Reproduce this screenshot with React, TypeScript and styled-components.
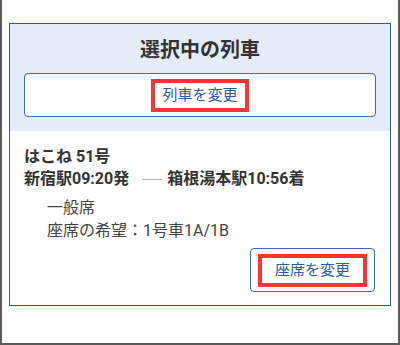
import React from "react";
import styled, { createGlobalStyle } from "styled-components";

const Global = createGlobalStyle`
  html, body { margin: 0; padding: 0; background: #fff; }
  body { font-family: Roboto, "Noto Sans CJK JP", sans-serif; }
  * { box-sizing: border-box; }
`;

const Frame = styled.div`
  width: 400px;
  height: 345px;
  border-left: 2px solid #5a5a5a;
  border-right: 2px solid #5a5a5a;
  border-bottom: 2px solid #5a5a5a;
  padding: 23px 7px 0 7px;
  background: #fff;
`;

const Card = styled.section`
  border: 1px solid #2f5ca6;
  background: #fff;
`;

const Header = styled.div`
  background: #e5ecf8;
  padding: 12px 14px 14px 14px;
  display: flex;
  flex-direction: column;
  align-items: stretch;
  gap: 9px;
`;

const Title = styled.h2`
  margin: 0;
  text-align: center;
  font-size: 20px;
  line-height: 28px;
  font-weight: 700;
  color: #333;
`;

const OutlineButton = styled.button<{ $wide?: boolean }>`
  height: 44px;
  ${(p) => (p.$wide ? "width: 100%;" : "padding: 0 7px;")}
  display: flex;
  align-items: center;
  justify-content: center;
  background: #fff;
  border: 1px solid #3d6bb3;
  border-radius: 4px;
  font-family: Roboto, "Noto Sans CJK JP", sans-serif;
  font-size: 15px;
  color: #2a5aa8;
  cursor: pointer;
`;

const Highlight = styled.span<{ $pad: number }>`
  display: inline-block;
  border: 4px solid #ff3333;
  padding: 0 ${(p) => p.$pad}px;
  line-height: 25px;
`;

const Body = styled.div`
  padding: 15px 15px 13px 14px;
  display: flex;
  flex-direction: column;
`;

const TrainName = styled.div`
  font-size: 16px;
  line-height: 22px;
  font-weight: 700;
  color: #333;
`;

const Route = styled.div`
  display: flex;
  align-items: center;
  font-size: 16px;
  line-height: 22px;
  font-weight: 700;
  color: #333;
`;

const Dash = styled.span`
  display: inline-block;
  width: 20px;
  height: 1px;
  background: #b5b5b5;
  margin: 0 5px 0 13px;
`;

const Details = styled.div`
  margin-top: 6px;
  padding-left: 23px;
  font-size: 16px;
  line-height: 23px;
  color: #444;
`;

const Actions = styled.div`
  display: flex;
  justify-content: flex-end;
  margin-top: 6px;
`;

export default function App() {
  return (
    <>
      <Global />
      <Frame>
        <Card>
          <Header>
            <Title>選択中の列車</Title>
            <OutlineButton $wide>
              <Highlight $pad={7}>列車を変更</Highlight>
            </OutlineButton>
          </Header>
          <Body>
            <TrainName>はこね 51号</TrainName>
            <Route>
              新宿駅09:20発
              <Dash />
              箱根湯本駅10:56着
            </Route>
            <Details>
              <div>一般席</div>
              <div>座席の希望：1号車1A/1B</div>
            </Details>
            <Actions>
              <OutlineButton>
                <Highlight $pad={13}>座席を変更</Highlight>
              </OutlineButton>
            </Actions>
          </Body>
        </Card>
      </Frame>
    </>
  );
}
